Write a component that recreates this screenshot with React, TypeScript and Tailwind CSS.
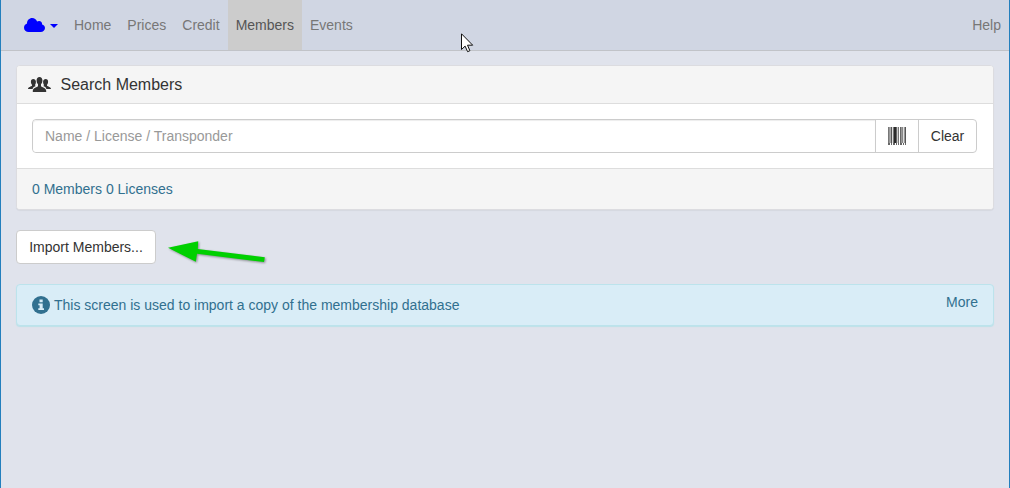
const navItems = [
  { label: "Home", active: false },
  { label: "Prices", active: false },
  { label: "Credit", active: false },
  { label: "Members", active: true },
  { label: "Events", active: false },
];

const bars = [
  { x: 0, w: 1, c: "#777" }, { x: 1, w: 1, c: "#999" }, { x: 2, w: 1, c: "#aaa" }, { x: 3, w: 1, c: "#555" },
  { x: 4, w: 1, c: "#ddd" }, { x: 5, w: 1, c: "#777" }, { x: 6, w: 2, c: "#2a2a2a" }, { x: 8, w: 1, c: "#666" },
  { x: 9, w: 1, c: "#ccc" }, { x: 10, w: 1, c: "#777" }, { x: 12, w: 1, c: "#666" }, { x: 13, w: 1, c: "#999" },
  { x: 14, w: 1, c: "#888" }, { x: 15, w: 1, c: "#ddd" }, { x: 16, w: 1, c: "#999" }, { x: 17, w: 1, c: "#555" },
];

function CloudIcon() {
  return (
    <svg className="h-[14px] w-[21px]" viewBox="0 0 21 14" fill="#00f">
      <path d="M4.700 14C2 14 0 12.200 0 9.700c0-2 1.200-3.600 3-4.200C3 2.300 5.300 0 8.200 0c2.200 0 4 1.400 4.900 3.600.6-.4 1.200-.6 1.900-.6 2 0 3.300 1.500 3.100 3.400C19.800 6.800 21 8.200 21 10 21 12.300 19.100 14 16.700 14z" />
    </svg>
  );
}

function GroupIcon() {
  return (
    <svg className="h-[15px] w-[23px]" viewBox="0 0 23 15" fill="#333">
      <path d="M5.300 2C3.700 2 2.900 3.100 2.900 4.700c0 1.400.5 2.400 1.100 3v1C3.300 9.500 0 9.900 0 12h4.600c.4-1.700 1.700-2.200 3.200-2.900-.3-.2-.7-.4-.7-.6v-.8c.4-.5.8-1.300.8-2.400V4.400C7.700 2.900 6.800 2 5.300 2z" />
      <path d="M17.700 2c1.600 0 2.400 1.100 2.400 2.700 0 1.400-.5 2.400-1.100 3v1c.7.8 4 1.200 4 3.300h-4.600c-.4-1.700-1.700-2.200-3.200-2.900.3-.2.7-.4.7-.6v-.8c-.4-.5-.8-1.300-.8-2.400V4.400C15.300 2.900 16.200 2 17.700 2z" />
      <path d="M11.500 0C9.700 0 8.600 1.300 8.600 3.300c0 1.900.6 3.200 1.400 4v1.900c-.6.900-5.200 1.500-5.200 4.500V15h13.400v-1.300c0-3-4.600-3.600-5.200-4.500V7.300c.8-.8 1.400-2.100 1.400-4C14.400 1.300 13.300 0 11.500 0z" />
    </svg>
  );
}

function BarcodeIcon() {
  return (
    <svg className="h-[18px] w-[18px]" viewBox="0 0 18 18" shapeRendering="crispEdges">
      {bars.map((b) => (
        <rect key={b.x} x={b.x} y="0" width={b.w} height="16" fill={b.c} />
      ))}
      <path d="M0 16h2v2H0zM3 16h1v2H3zM5 16h2v2H5zM8 16h1v2H8zM10 16h1v2h-1zM12 16h2v2h-2zM15 16h1v2h-1zM17 16h1v2h-1z" fill="#666" />
    </svg>
  );
}

function InfoIcon() {
  return (
    <svg className="h-[18px] w-[18px]" viewBox="0 0 18 18">
      <circle cx="9" cy="9" r="9" fill="#31708f" />
      <path d="M7.500 3.500h3.200v2.700H7.500zM6.300 7.500h4.400v4.700H12v1.900H6.300v-1.900h1.300V9.300H6.300z" fill="#d9edf7" />
    </svg>
  );
}

function GreenArrow() {
  return (
    <svg className="h-[32px] w-[106px] overflow-visible drop-shadow-[1.5px_1.5px_1px_rgba(0,0,0,0.4)]" viewBox="0 0 106 32">
      <path d="M0 7.800L30.200 1.300l-.4 7.600 67 8.300-.8 4.900L29 13.800l-1.200 8z" fill="#00d000" />
    </svg>
  );
}

export default function App() {
  return (
    <div className="relative flex h-[488px] w-[1010px] flex-col overflow-hidden border-x border-[#237fbd] bg-[#e0e3ec] font-['Liberation_Sans',Arial,sans-serif] text-sm leading-5 text-[#333]">
      <nav className="flex h-[51px] shrink-0 items-stretch border-b border-[#c1c3c8] bg-[#d0d6e3] text-[#777]">
        <button className="flex w-[65px] items-center pl-[23px]" aria-label="Menu">
          <CloudIcon />
          <span className="ml-[5px] mt-px border-x-4 border-t-4 border-x-transparent border-t-[#00f]" />
        </button>
        {navItems.map((item) => (
          <a key={item.label} className={item.active ? "bg-[#cccccc] px-2 py-[15px] text-[#555]" : "px-2 py-[15px]"}>
            {item.label}
          </a>
        ))}
        <a className="ml-auto px-2 py-[15px]">Help</a>
      </nav>

      <main className="px-[15px] pt-[14px]">
        <section className="overflow-hidden rounded border border-[#dcdce0] bg-white shadow-[0_1px_1px_rgba(0,0,0,0.05)]">
          <header className="flex h-[38px] items-center border-b border-[#ddd] bg-[#f5f5f5] pl-[11px]">
            <GroupIcon />
            <h1 className="ml-[9.500px] text-base leading-[18px]">Search Members</h1>
          </header>
          <div className="flex h-[65px] items-center border-b border-[#ddd] px-[15px]">
            <div className="flex h-[34px] w-[945px] rounded border border-[#ccc]">
              <input
                className="min-w-0 flex-1 rounded-l bg-white px-3 shadow-[inset_0_1px_1px_rgba(0,0,0,0.075)] outline-none placeholder:text-[#999]"
                placeholder="Name / License / Transponder"
              />
              <button className="flex w-[43px] items-center justify-center border-l border-[#ccc]" aria-label="Scan barcode">
                <BarcodeIcon />
              </button>
              <button className="w-[58px] border-l border-[#ccc]">Clear</button>
            </div>
          </div>
          <footer className="h-10 bg-[#f5f5f5] px-[15px] pt-[10px] text-[#31708f]">0 Members 0 Licenses</footer>
        </section>

        <div className="mt-5 flex h-[34px]">
          <button className="w-[140px] rounded border border-[#ccc] bg-white">Import Members...</button>
          <div className="ml-[12px] mt-[10px]">
            <GreenArrow />
          </div>
        </div>

        <aside className="mt-5 flex h-[42px] justify-between rounded border border-[#bce3ec] bg-[#d9edf7] px-[15px] text-[#31708f] shadow-[0_1px_1px_#bde1e9]">
          <p className="flex items-center">
            <InfoIcon />
            <span className="ml-1">This screen is used to import a copy of the membership database</span>
          </p>
          <a className="pt-[7px]">More</a>
        </aside>
      </main>

      <svg className="absolute left-[460px] top-[33px] h-[20px] w-[13px]" viewBox="0 0 13 20">
        <path d="M.5.800v15.700l3.600-3.400 2.500 5.600 2.300-1-2.400-5.500h5.200z" fill="#fff" stroke="#111" />
      </svg>
    </div>
  );
}
